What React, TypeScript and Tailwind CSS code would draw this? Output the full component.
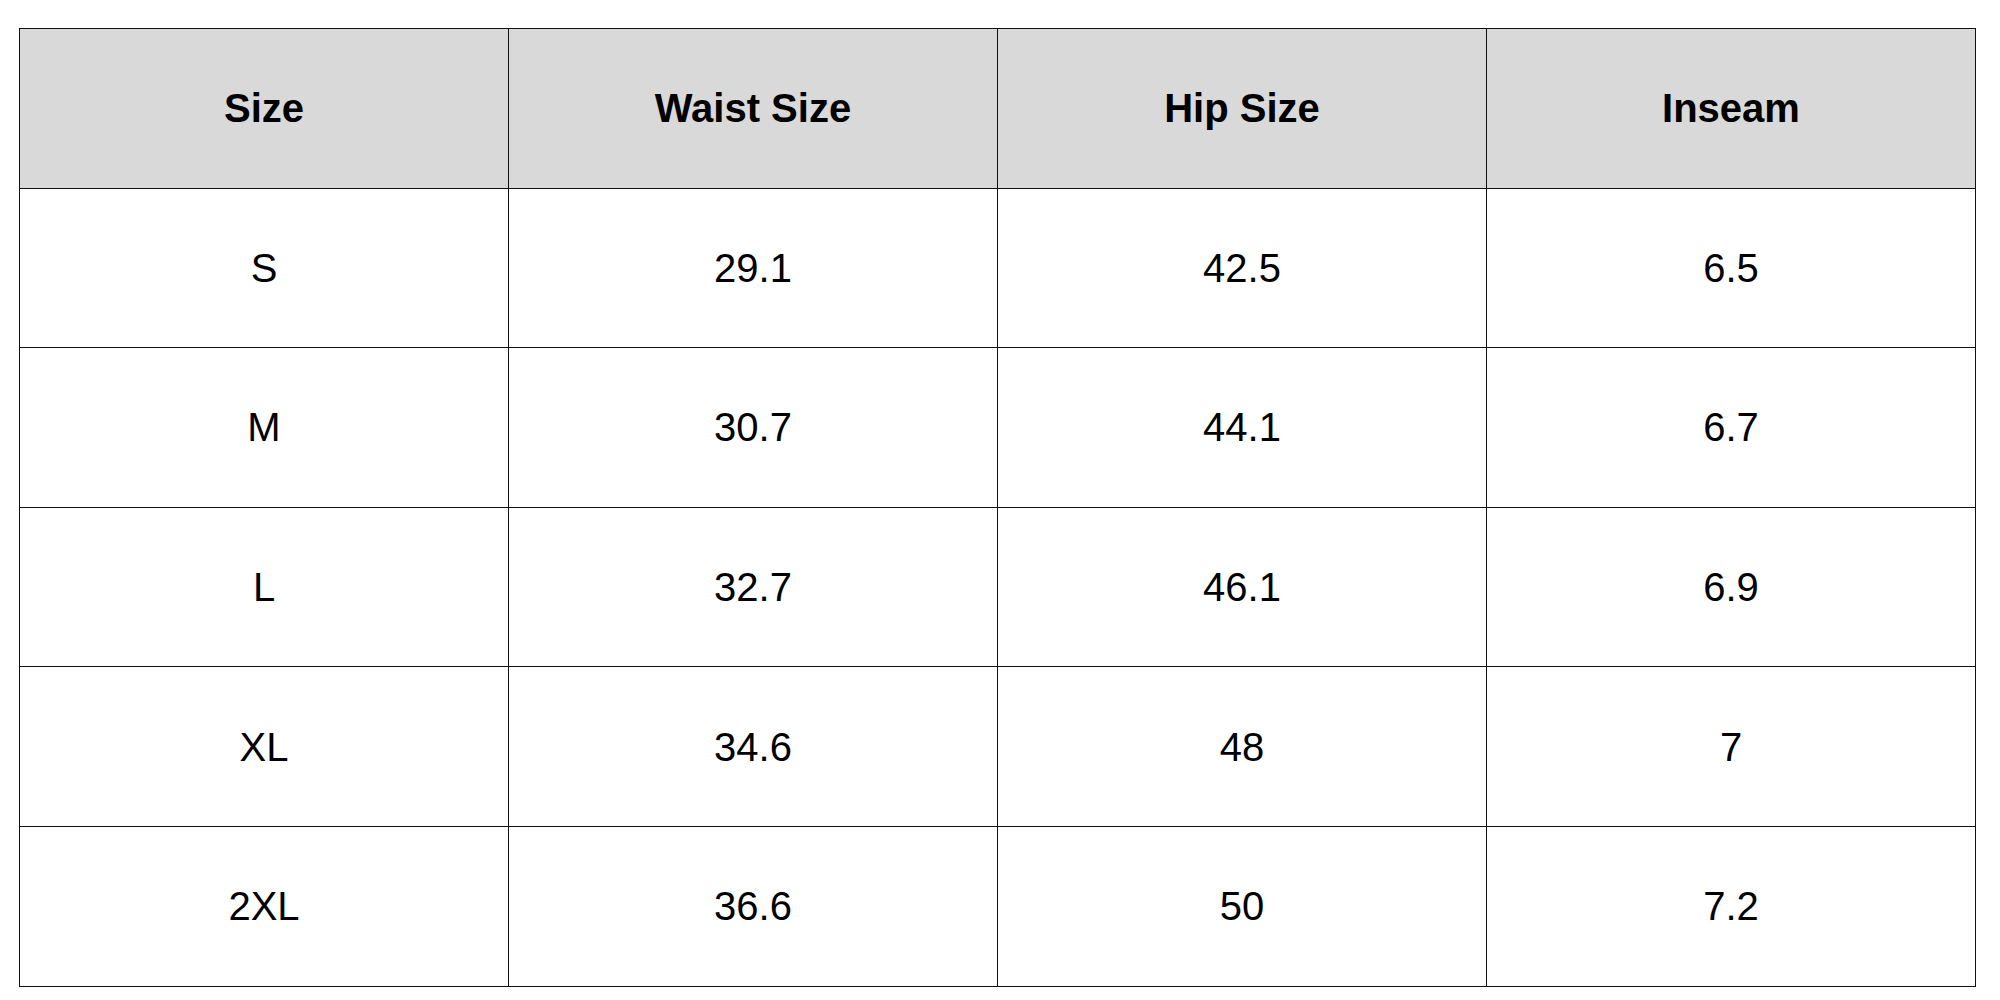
const headers = ["Size", "Waist Size", "Hip Size", "Inseam"];

const rows = [
  ["S", "29.1", "42.5", "6.5"],
  ["M", "30.7", "44.1", "6.7"],
  ["L", "32.7", "46.1", "6.9"],
  ["XL", "34.6", "48", "7"],
  ["2XL", "36.6", "50", "7.2"],
];

export default function App() {
  return (
    <div className="w-[2000px] h-[1000px] bg-white pt-[28px] pl-[19px] font-['Liberation_Sans',Arial,sans-serif] text-black">
      <table className="w-[1957px] border-collapse table-fixed">
        <thead>
          <tr className="h-[159.6px] bg-[#d9d9d9]">
            {headers.map((h) => (
              <th key={h} className="border border-[#111] text-[40px] font-bold text-center align-middle">
                {h}
              </th>
            ))}
          </tr>
        </thead>
        <tbody>
          {rows.map((r) => (
            <tr key={r[0]} className="h-[159.6px]">
              {r.map((c, i) => (
                <td key={i} className="border border-[#111] text-[40px] text-center align-middle">
                  {c}
                </td>
              ))}
            </tr>
          ))}
        </tbody>
      </table>
    </div>
  );
}
